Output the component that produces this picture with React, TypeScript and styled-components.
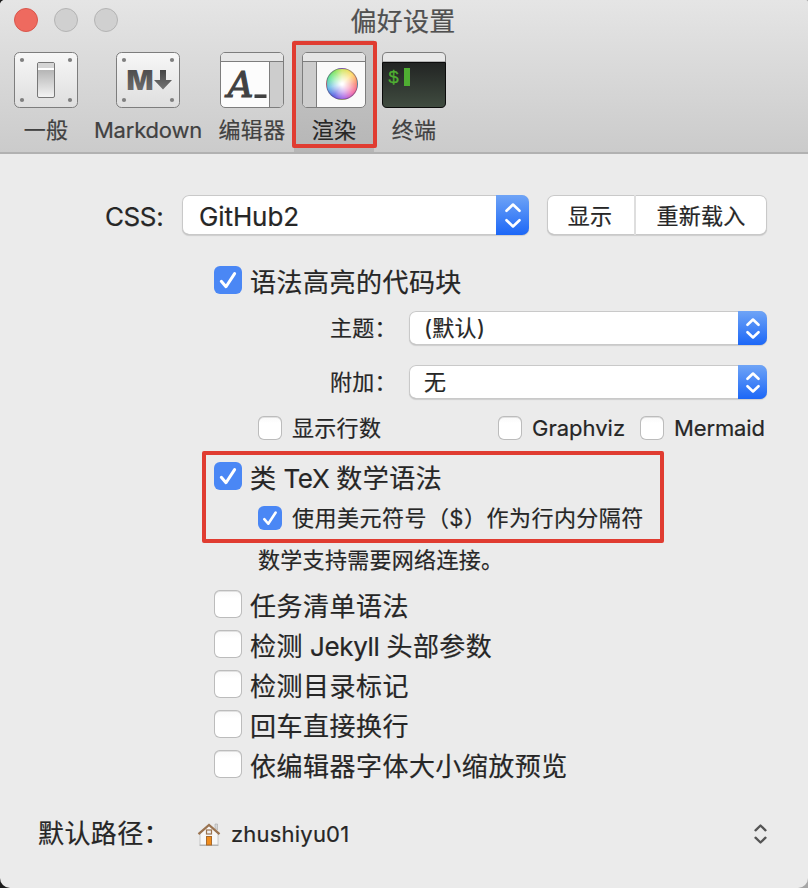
import React from "react";
import styled, { createGlobalStyle, css } from "styled-components";

const GlobalStyle = createGlobalStyle`
  * { box-sizing: border-box; }
  body {
    margin: 0;
    background: linear-gradient(90deg, #1c1c1c 0 50%, #a6a6a6 50% 100%);
  }
`;

const Window = styled.div`
  width: 808px;
  height: 888px;
  overflow: hidden;
  border-radius: 5px 3px 10px 10px;
  background: #ebebeb;
  color: #262626;
  font-family: Inter, "Noto Sans CJK SC", sans-serif;
  -webkit-text-stroke: 0.2px currentColor;
`;

const Header = styled.header`
  height: 154px;
  background: linear-gradient(#e5e5e5, #cbcbcb);
  border-bottom: 2px solid #b1b1b1;
`;

const TitleBar = styled.div`
  height: 40px;
  display: grid;
  grid-template-columns: 130px 1fr 132px;
  align-items: center;
`;

const Lights = styled.div`
  display: flex;
  gap: 16px;
  padding-left: 14px;
`;

const Light = styled.span<{ $close?: boolean }>`
  width: 24px;
  height: 24px;
  border-radius: 50%;
  background: ${(p) => (p.$close ? "#ee6a5f" : "#d0d0d0")};
  border: 1px solid ${(p) => (p.$close ? "#d9564c" : "#b4b4b4")};
`;

const Text = styled.span<{ $size?: number; $track?: number; $shift?: number }>`
  font-size: ${(p) => p.$size ?? 22}px;
  line-height: 28px;
  letter-spacing: ${(p) => p.$track ?? 0.3}px;
  margin-top: ${(p) => p.$shift ?? 0}px;
  white-space: pre;
`;

const Latin = styled.span`
  letter-spacing: -0.35px;
`;

const Title = styled(Text)`
  text-align: center;
  color: #505050;
`;

const Toolbar = styled.nav`
  display: grid;
  grid-template-columns: 80px 124px 84px 80px 80px;
  height: 112px;
  padding-left: 6px;
`;

const ToolItem = styled.div<{ $selected?: boolean }>`
  position: relative;
  display: flex;
  flex-direction: column;
  align-items: center;
  padding-top: 12px;
  gap: 8px;
  color: #414141;
  ${(p) =>
    p.$selected &&
    css`
      color: #262626;
      background: linear-gradient(#c8c8c8, #b6b6b6);
    `}
`;

const Highlight = styled.div<{ $x: number; $y: number; $w: number; $h: number }>`
  position: absolute;
  left: ${(p) => p.$x}px;
  top: ${(p) => p.$y}px;
  width: ${(p) => p.$w}px;
  height: ${(p) => p.$h}px;
  border: 4px solid #e03c31;
  border-radius: 2px;
  pointer-events: none;
`;

const WheelFrame = styled.div`
  display: grid;
  width: 64px;
  height: 56px;
  > * { grid-area: 1 / 1; }
`;

const Wheel = styled.div`
  width: 32px;
  height: 32px;
  margin: 16px 0 0 24px;
  border-radius: 50%;
  border: 1px solid rgba(90, 70, 110, 0.55);
  background:
    radial-gradient(circle, #fff 5%, rgba(255, 255, 255, 0.6) 38%, rgba(255, 255, 255, 0.12) 72%),
    conic-gradient(#c8e046, #ffd34a 45deg, #f7705e 90deg, #ef4f9b 130deg, #a04be0 170deg, #3d46dd 215deg, #46a9e0 255deg, #43dd83 295deg, #70e043 330deg, #c8e046);
`;

const Body = styled.main`
  display: flex;
  flex-direction: column;
  height: 734px;
  padding-top: 41px;
`;

const Row = styled.div<{ $h?: number; $top?: number; $left?: number }>`
  position: relative;
  display: flex;
  align-items: center;
  flex: none;
  height: ${(p) => p.$h ?? 28}px;
  margin-top: ${(p) => p.$top ?? 0}px;
  padding-left: ${(p) => p.$left ?? 0}px;
`;

const Label = styled(Text)<{ $w: number }>`
  width: ${(p) => p.$w}px;
`;

const Group = styled.section`
  position: relative;
  flex: none;
`;

const List = styled.div`
  display: flex;
  flex-direction: column;
  gap: 12px;
  margin-top: 17px;
`;

const SelectBox = styled.div<{ $w: number; $h: number; $pad?: number }>`
  display: flex;
  align-items: center;
  justify-content: space-between;
  flex: none;
  width: ${(p) => p.$w}px;
  height: ${(p) => p.$h}px;
  padding-left: ${(p) => p.$pad ?? 15}px;
  border-radius: 7px;
  background: #fff;
  box-shadow: inset 0 0 0 1px #c9c9c9, inset 0 -1px 0 #ababab, 0 1px 1px rgba(0, 0, 0, 0.13);
`;

const Stepper = styled.span<{ $w: number }>`
  display: flex;
  align-items: center;
  justify-content: center;
  width: ${(p) => p.$w}px;
  height: 100%;
  border-radius: 0 7px 7px 0;
  background: linear-gradient(#6fa4f6, #1c67f7);
`;

const Segmented = styled.div`
  display: flex;
  width: 220px;
  height: 40px;
  margin-left: 18px;
  border-radius: 7px;
  background: #fff;
  box-shadow: inset 0 0 0 1px #c9c9c9, inset 0 -1px 0 #ababab, 0 1px 1px rgba(0, 0, 0, 0.13);
`;

const Segment = styled.button<{ $w: number }>`
  display: flex;
  align-items: center;
  justify-content: center;
  width: ${(p) => p.$w}px;
  padding: 2px 1px 0 0;
  border: 0;
  background: none;
  color: inherit;
  font-family: inherit;
  & + & { border-left: 2px solid #dedede; }
`;

const CheckBox = styled.span<{ $size: number; $on?: boolean }>`
  display: flex;
  flex: none;
  width: ${(p) => p.$size}px;
  height: ${(p) => p.$size}px;
  border-radius: 6px;
  background: ${(p) => (p.$on ? "#4a87f5" : "linear-gradient(#f8f8f8, #fff 30%)")};
  ${(p) => !p.$on && css`box-shadow: inset 0 0 0 1px #bcbcbc, inset 0 1px 0 1px #b0b0b055;`}
`;

const Option = styled.label<{ $gap: number; $w?: number }>`
  display: flex;
  align-items: center;
  gap: ${(p) => p.$gap}px;
  width: ${(p) => (p.$w ? `${p.$w}px` : "auto")};
`;

const PathSelect = styled.div`
  display: flex;
  flex: 1;
  align-items: center;
  justify-content: space-between;
  padding-right: 41px;
`;

const PathValue = styled.span`
  display: flex;
  align-items: center;
  gap: 10px;
`;

function Check({ size, on }: { size: number; on?: boolean }) {
  return (
    <CheckBox $size={size} $on={on}>
      {on && (
        <svg width={size} height={size} viewBox="0 0 28 28" fill="none">
          <path d="M7.300 15.300 12 20.700 20.600 7.600" stroke="#fff" strokeWidth="3" strokeLinecap="round" strokeLinejoin="round" />
        </svg>
      )}
    </CheckBox>
  );
}

function Arrows({ w, h, color = "#fff", stroke = 2.6 }: { w: number; h: number; color?: string; stroke?: number }) {
  const rise = w / 2 - 0.2;
  return (
    <svg width={w} height={h} viewBox={`0 0 ${w} ${h}`} fill="none" stroke={color} strokeWidth={stroke} strokeLinecap="round" strokeLinejoin="round">
      <path d={`M1.5 ${rise} ${w / 2} 1.5 ${w - 1.5} ${rise}M1.5 ${h - rise} ${w / 2} ${h - 1.5} ${w - 1.5} ${h - rise}`} />
    </svg>
  );
}

function Option28({ text, on }: { text: string; on?: boolean }) {
  return (
    <Option $gap={8}>
      <Check size={28} on={on} />
      <Text $size={26} $track={0.48} $shift={5}>
        {text.split(/( \w+ )/).map((part, i) => (i % 2 ? <Latin key={i}>{part}</Latin> : part))}
      </Text>
    </Option>
  );
}

function Option24({ text, on, w, track }: { text: string; on?: boolean; w?: number; track?: number }) {
  return (
    <Option $gap={10} $w={w}>
      <Check size={24} on={on} />
      <Text $track={track} $shift={-1}>{text}</Text>
    </Option>
  );
}

function Plate({ children }: { children: React.ReactNode }) {
  return (
    <svg width="64" height="56" viewBox="0 0 64 56">
      <defs>
        <linearGradient id="plate" x2="0" y2="1">
          <stop stopColor="#f7f7f7" />
          <stop offset="1" stopColor="#dedede" />
        </linearGradient>
        <linearGradient id="knob" x2="0" y2="1">
          <stop stopColor="#a4a4a4" />
          <stop offset="1" stopColor="#f4f4f4" />
        </linearGradient>
        <linearGradient id="ink" x2="0" y2="1">
          <stop stopColor="#444" />
          <stop offset="1" stopColor="#757575" />
        </linearGradient>
      </defs>
      <rect x=".5" y=".5" width="63" height="55" rx="5" fill="url(#plate)" stroke="#7d7d7d" />
      {[[8, 8], [56, 8], [8, 48], [56, 48]].map(([x, y]) => (
        <circle key={`${x}-${y}`} cx={x} cy={y} r="2.1" fill="#7f7f7f" />
      ))}
      {children}
    </svg>
  );
}

function SwitchIcon() {
  return (
    <Plate>
      <rect x="23.5" y="10.5" width="17" height="35" rx="1.5" fill="url(#knob)" stroke="#777" />
      <rect x="24" y="11" width="16" height="5" fill="#d5d5d5" />
      <rect x="24" y="16" width="16" height="2" fill="#fff" />
    </Plate>
  );
}

function MarkdownIcon() {
  return (
    <Plate>
      <text x="10.5" y="38" fontFamily="Inter, sans-serif" fontWeight="900" fontSize="27.5" textLength="27" lengthAdjust="spacingAndGlyphs" fill="url(#ink)">M</text>
      <path d="M44 18h6v10h6L47 37.5 38 28h6z" fill="url(#ink)" />
    </Plate>
  );
}

function EditorIcon() {
  return (
    <svg width="64" height="56" viewBox="0 0 64 56">
      <rect x=".5" y=".5" width="63" height="55" rx="4.5" fill="#fcfcfc" stroke="#7d7d7d" />
      <path d="M1 9V5q0-4 4-4h54q4 0 4 4v4z" fill="#e6e6e6" />
      <path d="M49 10h14v41q0 4-4 4H49z" fill="#cdcdcd" />
      <path d="M1 9.5h62M49.5 10v45" stroke="#7d7d7d" />
      <text x="7.5" y="45" fontFamily="'DejaVu Serif', serif" fontStyle="italic" fontSize="36" stroke="#414141" strokeWidth="1.1" textLength="26" lengthAdjust="spacingAndGlyphs" fill="#414141">A</text>
      <path d="M34.500 44.200h12" stroke="#414141" strokeWidth="3.600" />
    </svg>
  );
}

function RenderIcon() {
  return (
    <WheelFrame>
      <svg width="64" height="56" viewBox="0 0 64 56">
        <rect x=".5" y=".5" width="63" height="55" rx="4.5" fill="#fafafa" stroke="#7d7d7d" />
        <path d="M1 9V5q0-4 4-4h54q4 0 4 4v4z" fill="#e6e6e6" />
        <path d="M1 10h13v45H5q-4 0-4-4z" fill="#cdcdcd" />
        <path d="M1 9.5h62M14.5 10v45" stroke="#7d7d7d" />
      </svg>
      <Wheel />
    </WheelFrame>
  );
}

function TerminalIcon() {
  return (
    <svg width="64" height="56" viewBox="0 0 64 56">
      <defs>
        <linearGradient id="screen" x2="0" y2="1">
          <stop stopColor="#222423" />
          <stop offset="1" stopColor="#404c40" />
        </linearGradient>
      </defs>
      <path d="M.5 10V5Q.5.5 5 .5h54q4.500 0 4.500 4.500v5z" fill="#e8e8e8" stroke="#7d7d7d" />
      <path d="M.5 10.500h63V51q0 4.500-4.500 4.500H5Q.5 55.500.5 51z" fill="url(#screen)" stroke="#0b0b0b" />
      <text x="6" y="31" fontFamily="'Liberation Mono', monospace" fontSize="18.500" stroke="#4fae32" strokeWidth=".3" fill="#4fae32">$</text>
      <rect x="22" y="16" width="6" height="18" fill="#4fae32" />
    </svg>
  );
}

function HomeIcon() {
  return (
    <svg width="24" height="26" viewBox="0 0 24 26">
      <path d="M18 3h2.500v6L18 7z" fill="#d6d6d6" stroke="#aaa" strokeWidth=".6" />
      <path d="M3 12 12 4l9 8v12H3z" fill="#f7f7f7" stroke="#bcbcbc" strokeWidth=".8" />
      <path d="M2.500 24.300h19" stroke="#aaa" />
      <path d="M1.500 13.200 12 4l10.500 9.200" fill="none" stroke="#9a7350" strokeWidth="2.300" />
      <rect x="9.500" y="9" width="5" height="4" fill="#eee" stroke="#9a7350" strokeWidth="1.200" />
      <rect x="9.500" y="15.500" width="5" height="8.500" fill="#f08c1c" stroke="#a86a2c" />
    </svg>
  );
}

const tools = [
  { name: "一般", icon: <SwitchIcon /> },
  { name: "Markdown", icon: <MarkdownIcon />, track: -0.2 },
  { name: "编辑器", icon: <EditorIcon /> },
  { name: "渲染", icon: <RenderIcon />, selected: true },
  { name: "终端", icon: <TerminalIcon /> },
];

const extras = ["任务清单语法", "检测 Jekyll 头部参数", "检测目录标记", "回车直接换行", "依编辑器字体大小缩放预览"];

export default function App() {
  return (
    <>
      <GlobalStyle />
      <Window>
        <Header>
          <TitleBar>
            <Lights>
              <Light $close />
              <Light />
              <Light />
            </Lights>
            <Title $size={26} $track={0.3} $shift={3}>偏好设置</Title>
          </TitleBar>
          <Toolbar>
            {tools.map((t) => (
              <ToolItem key={t.name} $selected={t.selected}>
                {t.icon}
                <Text $track={t.track}>{t.name}</Text>
                {t.selected && <Highlight $x={-2} $y={1} $w={85} $h={107} />}
              </ToolItem>
            ))}
          </Toolbar>
        </Header>
        <Body>
          <Row $h={40} $left={105}>
            <Label $w={77} $size={26} $track={-0.4} $shift={4}>CSS:</Label>
            <SelectBox $w={347} $h={40} $pad={17}>
              <Text $size={26} $track={-0.1} $shift={4}>GitHub2</Text>
              <Stepper $w={33}><Arrows w={16} h={25} /></Stepper>
            </SelectBox>
            <Segmented>
              <Segment $w={87}><Text>显示</Text></Segment>
              <Segment $w={133}><Text>重新载入</Text></Segment>
            </Segmented>
          </Row>
          <Row $top={31} $left={214}><Option28 text="语法高亮的代码块" on /></Row>
          <Row $h={34} $top={17} $left={330}>
            <Label $w={79}>主题：</Label>
            <SelectBox $w={358} $h={34}>
              <Text>(默认)</Text>
              <Stepper $w={29}><Arrows w={14} h={21} /></Stepper>
            </SelectBox>
          </Row>
          <Row $h={34} $top={20} $left={330}>
            <Label $w={79}>附加：</Label>
            <SelectBox $w={358} $h={34}>
              <Text>无</Text>
              <Stepper $w={29}><Arrows w={14} h={21} /></Stepper>
            </SelectBox>
          </Row>
          <Row $h={24} $top={17} $left={258}>
            <Option24 text="显示行数" w={240} />
            <Option24 text="Graphviz" w={142} track={0} />
            <Option24 text="Mermaid" track={-0.15} />
          </Row>
          <Group>
            <Row $top={22} $left={214}><Option28 text="类 TeX 数学语法" on /></Row>
            <Row $h={24} $top={16} $left={258}><Option24 text="使用美元符号（$）作为行内分隔符" track={0.48} on /></Row>
            <Highlight $x={202} $y={11} $w={462} $h={92} />
          </Group>
          <Row $h={24} $top={19} $left={258}><Text $shift={-2}>数学支持需要网络连接。</Text></Row>
          <List>
            {extras.map((text) => (
              <Row key={text} $left={214}><Option28 text={text} /></Row>
            ))}
          </List>
          <Row $top={42} $left={38}>
            <Label $w={159} $size={26} $track={0.4}>默认路径：</Label>
            <PathSelect>
              <PathValue>
                <HomeIcon />
                <Text $track={0.2}>zhushiyu01</Text>
              </PathValue>
              <Arrows w={13} h={20} color="#555" stroke={2.3} />
            </PathSelect>
          </Row>
        </Body>
      </Window>
    </>
  );
}
